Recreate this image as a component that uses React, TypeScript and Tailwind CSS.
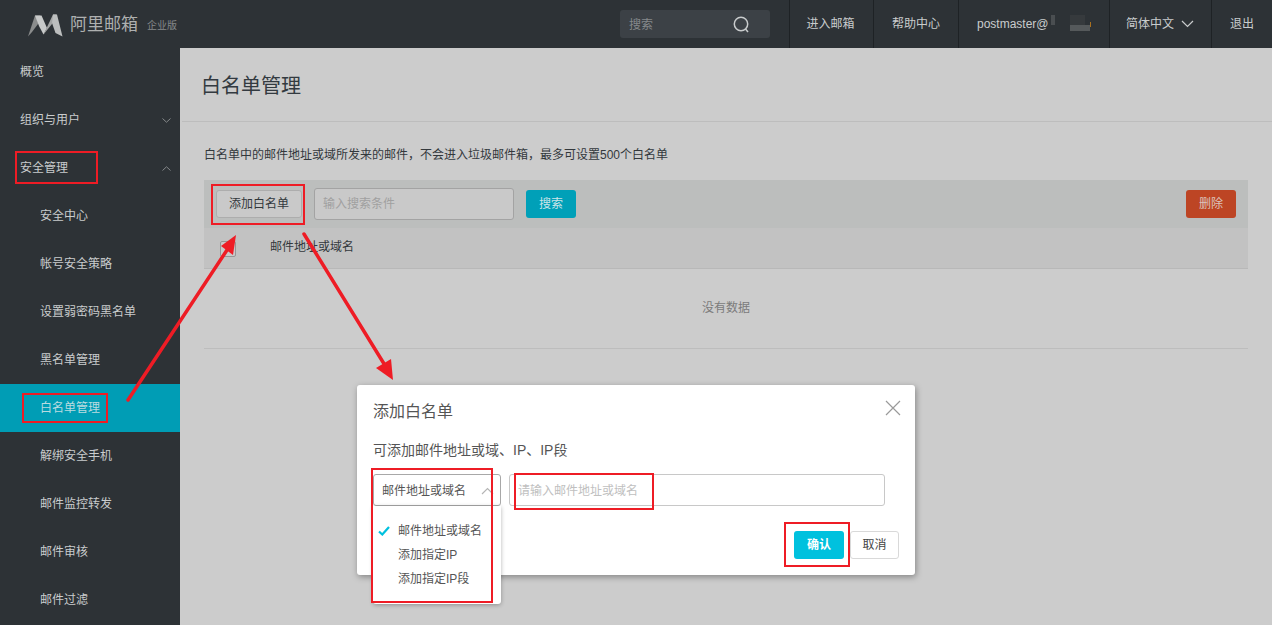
import React from "react";

const font = { fontFamily: '"Liberation Sans", "Noto Sans CJK SC", sans-serif' };

function Chevron({ up, className }: { up?: boolean; className?: string }) {
  return (
    <svg width="9" height="5" viewBox="0 0 9 5" className={className} fill="none" stroke="currentColor" strokeWidth="1">
      <path d={up ? "M0.5 4.500L4.500 0.800l4 3.700" : "M0.500 0.500L4.500 4.200l4-3.700"} />
    </svg>
  );
}

const menu: { label: string; sub?: boolean; active?: boolean; chevron?: "up" | "down" }[] = [
  { label: "概览" },
  { label: "组织与用户", chevron: "down" },
  { label: "安全管理", chevron: "up" },
  { label: "安全中心", sub: true },
  { label: "帐号安全策略", sub: true },
  { label: "设置弱密码黑名单", sub: true },
  { label: "黑名单管理", sub: true },
  { label: "白名单管理", sub: true, active: true },
  { label: "解绑安全手机", sub: true },
  { label: "邮件监控转发", sub: true },
  { label: "邮件审核", sub: true },
  { label: "邮件过滤", sub: true },
];

function RedBox({ className }: { className: string }) {
  return <div className={`absolute border-2 border-[#ee1c25] pointer-events-none ${className}`} />;
}

export default function App() {
  return (
    <div className="relative w-[1272px] h-[625px] overflow-hidden bg-[#cccccc] text-[12px]" style={font}>
      <header className="h-12 bg-[#2d3236] flex items-center text-[#c9cccd]">
        <div className="w-[620px] flex items-center pl-[28px] shrink-0">
          <svg width="35" height="23" viewBox="0 0 35 23" className="mt-[2px]">
            <path d="M0 22.500L7 1.500h5l1 4.500L4 18z" fill="#8a8c8c" />
            <path d="M7 1.500h6.500L19 14l-3.500 6.500L11 12z" fill="#c8caca" />
            <path d="M15.500 20.500L25 0.500h3.500L24 10z" fill="#a3a5a5" />
            <path d="M25 0.500h4L34.500 22.500 27.500 19 24 9z" fill="#bcbebe" />
          </svg>
          <span className="ml-[7px] mt-[2px] text-[17px] leading-6 text-[#aeb0b0]">阿里邮箱</span>
          <span className="ml-[9px] mt-[2px] text-[10px] text-[#85898b]">企业版</span>
        </div>
        <div className="w-[150px] h-7 bg-[#3c4146] rounded-[3px] flex items-center justify-between pl-[9px] pr-[20px] text-[#85898b]">
          <span className="pt-[2px]">搜索</span>
          <svg width="17" height="17" viewBox="0 0 17 17" fill="none" stroke="#c9cccd" strokeWidth="1.500">
            <circle cx="8" cy="8" r="6.700" />
            <path d="M12.500 13l2.500 3" />
          </svg>
        </div>
        <div className="w-[19px] shrink-0" />
        <nav className="flex h-full flex-1">
          <div className="w-[84px] border-l border-[#1e2225] flex items-center justify-center pr-[2px]">进入邮箱</div>
          <div className="w-[85px] border-l border-[#1e2225] flex items-center justify-center">帮助中心</div>
          <div className="relative w-[151px] border-l border-[#1e2225] flex items-center pl-[18px]">
            <span>postmaster@</span>
            <span className="absolute left-[92px] top-[15px] w-[4px] h-[10px] bg-[#4a4e51]" />
            <span className="absolute left-[111px] top-[15px] w-[15px] h-[10px] bg-[#363a3d]" />
            <span className="absolute left-[111px] top-[25px] w-[20px] h-[6px] bg-[#55595b]" />
            <span className="absolute left-[131px] top-[22px] w-px h-[5px] bg-[#a8701f]" />
          </div>
          <div className="w-[102px] border-l border-[#1e2225] flex items-center justify-center gap-[7px] pr-px">
            <span>简体中文</span>
            <svg width="13" height="8" viewBox="0 0 13 8" fill="none" stroke="currentColor" strokeWidth="1.200">
              <path d="M1 1l5.500 5.500L12 1" />
            </svg>
          </div>
          <div className="flex-1 border-l border-[#1e2225] flex items-center justify-center">退出</div>
        </nav>
      </header>

      <div className="flex h-[577px]">
        <aside className="w-[180px] shrink-0 bg-[#2d3236] text-[#c9cccd]">
          {menu.map((m) => (
            <div
              key={m.label}
              className={`h-12 flex items-center justify-between pr-[9px] ${m.sub ? "pl-10" : "pl-5"} ${m.active ? "bg-[#009db5] text-[#b9dbe0]" : ""}`}
            >
              <span>{m.label}</span>
              {m.chevron && <Chevron up={m.chevron === "up"} className="text-[#85898b]" />}
            </div>
          ))}
        </aside>

        <main className="flex-1 min-w-0">
          <div className="h-[74px] border-b border-[#bdbdbd] ml-[2px] flex items-center pl-[19px]">
            <h1 className="text-[20px] leading-7 text-[#333a40] pt-[2px]">白名单管理</h1>
          </div>
          <div className="pl-6 pr-6">
            <p className="pt-[24px] h-[58px] leading-[18px] text-[#33383c]">
              白名单中的邮件地址或域所发来的邮件，不会进入垃圾邮件箱，最多可设置500个白名单
            </p>
            <div className="h-12 bg-[#bcbebd] flex items-center pl-3 pr-3">
              <div className="w-[86px] h-7 border border-[#adadad] rounded-[3px] bg-[#c9c9c9] flex items-center justify-center text-[#33383c]">
                添加白名单
              </div>
              <div className="ml-3 w-[200px] h-8 border border-[#a3a3a3] rounded-[3px] bg-[#c9c9c9] flex items-center pl-2 text-[#a0a0a0]">
                输入搜索条件
              </div>
              <div className="ml-3 w-[50px] h-7 rounded-[3px] bg-[#00a0b8] flex items-center justify-center text-[#cde4e8]">
                搜索
              </div>
              <div className="ml-auto w-[50px] h-7 rounded-[3px] bg-[#bd4524] flex items-center justify-center text-[#dcc4bd]">
                删除
              </div>
            </div>
            <div className="h-[41px] bg-[#c2c2c2] border-b border-[#b8b8b8] flex items-center pl-[16px] pb-[3px] text-[#33383c]">
              <div className="w-4 h-4 mt-1 border border-[#969696] rounded-[2px] bg-[#c9c9c9]" />
              <span className="ml-[34px]">邮件地址或域名</span>
            </div>
            <div className="h-20 border-b border-[#bdbdbd] flex items-center justify-center pb-px text-[#7b7b7b]">没有数据</div>
          </div>
        </main>
      </div>

      {/* modal */}
      <div className="absolute left-[357px] top-[385px] w-[558px] h-[190px] bg-white rounded-[3px] shadow-[1px_2px_6px_rgba(0,0,0,0.35)] px-4">
        <div className="h-[52px] flex items-center justify-between">
          <span className="text-[16px] text-[#555] pt-[2px]">添加白名单</span>
          <svg width="16" height="16" viewBox="0 0 16 16" className="-mr-[2px] mt-[-6px]" fill="none" stroke="#9a9a9a" strokeWidth="1.200">
            <path d="M1 1l14 14M15 1L1 15" />
          </svg>
        </div>
        <div className="h-[37px] pt-[2px] text-[14px] leading-[22px] text-[#555]">可添加邮件地址或域、IP、IP段</div>
        <div className="flex gap-2">
          <div className="w-[128px] h-8 border border-[#a8a8a8] rounded-[3px] flex items-center justify-between pl-2 pr-[6px] pt-[2px] text-[#555]">
            <span>邮件地址或域名</span>
            <svg width="13" height="8" viewBox="0 0 13 8" fill="none" stroke="#b5b5b5" strokeWidth="1.200">
              <path d="M1 7l5.500-5.500L12 7" />
            </svg>
          </div>
          <div className="w-[376px] h-8 border border-[#c8c8c8] rounded-[3px] flex items-center pl-2 pt-[2px] text-[#c0c0c0]">
            请输入邮件地址或域名
          </div>
        </div>
        <div className="flex justify-end gap-[6px] mt-[25px]">
          <div className="w-[50px] h-7 rounded-[3px] bg-[#00c1de] flex items-center justify-center text-white font-bold">确认</div>
          <div className="w-[49px] h-7 rounded-[3px] border border-[#d9d9d9] flex items-center justify-center text-[#444]">取消</div>
        </div>
      </div>

      {/* dropdown */}
      <div className="absolute left-[373px] top-[506px] w-[128px] h-[98px] bg-white rounded-b-[3px] shadow-[0_1px_4px_rgba(0,0,0,0.3)] pt-[13px] text-[#555]">
        <div className="h-6 flex items-center">
          <svg width="12" height="10" viewBox="0 0 12 10" className="ml-[5px]" fill="none" stroke="#00c1de" strokeWidth="2.200">
            <path d="M1 5.500L4.300 8.500L11 1" />
          </svg>
          <span className="ml-2">邮件地址或域名</span>
        </div>
        <div className="h-6 flex items-center pl-[25px]">添加指定IP</div>
        <div className="h-6 flex items-center pl-[25px]">添加指定IP段</div>
      </div>

      {/* annotations */}
      <RedBox className="left-[15px] top-[151px] w-[83px] h-[33px]" />
      <RedBox className="left-[22px] top-[393px] w-[86px] h-[30px]" />
      <RedBox className="left-[211px] top-[184px] w-[94px] h-[41px]" />
      <RedBox className="left-[371px] top-[468px] w-[122px] h-[135px]" />
      <RedBox className="left-[514px] top-[473px] w-[140px] h-[37px]" />
      <RedBox className="left-[784px] top-[522px] w-[66px] h-[45px]" />
      <svg className="absolute inset-0 pointer-events-none" width="1272" height="625" viewBox="0 0 1272 625">
        <path d="M128 400L229 247" stroke="#ee1c25" strokeWidth="3.500" strokeLinecap="round" fill="none" />
        <path d="M236 235l-3 20-12-9z" fill="#ee1c25" />
        <path d="M304 234L386 367" stroke="#ee1c25" strokeWidth="3.500" strokeLinecap="round" fill="none" />
        <path d="M393 380l-17-12 15-9z" fill="#ee1c25" />
      </svg>
    </div>
  );
}
